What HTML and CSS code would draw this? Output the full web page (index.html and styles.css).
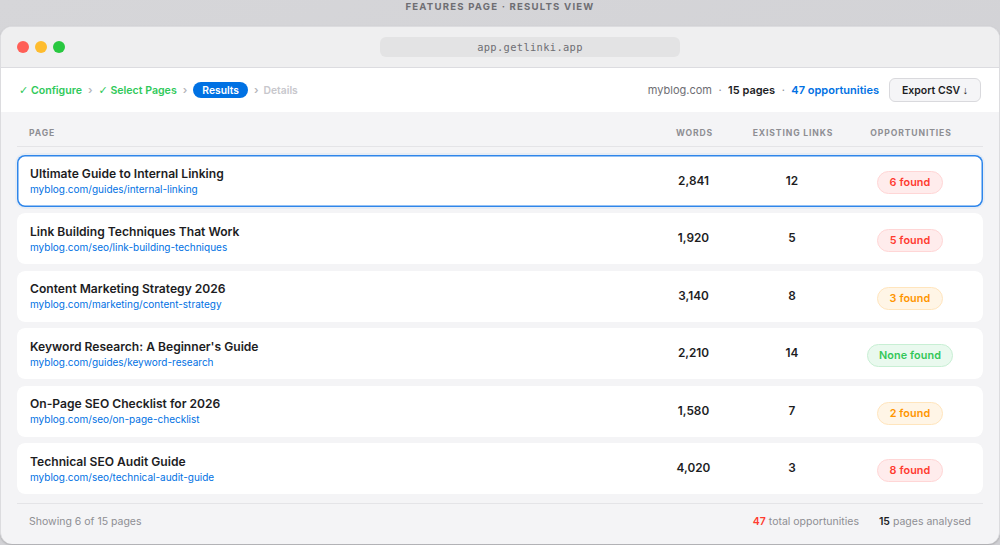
FILE: index.html
```html
<!DOCTYPE html>
<html lang="en">
<head>
<meta charset="utf-8">
<title>Results view</title>
<link rel="stylesheet" href="styles.css">
</head>
<body>
<div class="caption">FEATURES PAGE · RESULTS VIEW</div>
<main class="window">
  <header class="titlebar">
    <div class="lights"><i class="light l-red"></i><i class="light l-yellow"></i><i class="light l-green"></i></div>
    <div class="address">app.getlinki.app</div>
  </header>
  <nav class="toolbar">
    <div class="steps">
      <span class="step done"><span class="tick">✓</span> Configure</span><span class="sep">›</span>
      <span class="step done"><span class="tick">✓</span> Select Pages</span><span class="sep">›</span>
      <span class="step current">Results</span><span class="sep">›</span>
      <span class="step todo">Details</span>
    </div>
    <div class="summary">
      <span class="domain">myblog.com</span><span class="dot">·</span>
      <strong class="count">15 pages</strong><span class="dot">·</span>
      <strong class="opps">47 opportunities</strong>
      <button class="export">Export CSV <span class="arrow">↓</span></button>
    </div>
  </nav>
  <section class="content">
    <div class="grid head">
      <span>PAGE</span><span class="center">WORDS</span><span class="center">EXISTING LINKS</span><span class="center">OPPORTUNITIES</span>
    </div>
    <div class="rows">
      <article class="grid row selected">
        <div><h2>Ultimate Guide to Internal Linking</h2><a>myblog.com/guides/internal-linking</a></div>
        <b class="center">2,841</b><b class="center">12</b>
        <div class="center"><span class="pill bad">6 found</span></div>
      </article>
      <article class="grid row">
        <div><h2>Link Building Techniques That Work</h2><a>myblog.com/seo/link-building-techniques</a></div>
        <b class="center">1,920</b><b class="center">5</b>
        <div class="center"><span class="pill bad">5 found</span></div>
      </article>
      <article class="grid row">
        <div><h2>Content Marketing Strategy 2026</h2><a>myblog.com/marketing/content-strategy</a></div>
        <b class="center">3,140</b><b class="center">8</b>
        <div class="center"><span class="pill warn">3 found</span></div>
      </article>
      <article class="grid row">
        <div><h2>Keyword Research: A Beginner's Guide</h2><a>myblog.com/guides/keyword-research</a></div>
        <b class="center">2,210</b><b class="center">14</b>
        <div class="center"><span class="pill good">None found</span></div>
      </article>
      <article class="grid row">
        <div><h2>On-Page SEO Checklist for 2026</h2><a>myblog.com/seo/on-page-checklist</a></div>
        <b class="center">1,580</b><b class="center">7</b>
        <div class="center"><span class="pill warn">2 found</span></div>
      </article>
      <article class="grid row">
        <div><h2>Technical SEO Audit Guide</h2><a>myblog.com/seo/technical-audit-guide</a></div>
        <b class="center">4,020</b><b class="center">3</b>
        <div class="center"><span class="pill bad">8 found</span></div>
      </article>
    </div>
    <footer class="foot">
      <span>Showing 6 of 15 pages</span>
      <div class="totals">
        <span><b class="total-red">47</b> total opportunities</span>
        <span><b class="total-ink">15</b> pages analysed</span>
      </div>
    </footer>
  </section>
</main>
</body>
</html>
```

FILE: styles.css
```css
* { box-sizing: border-box; }
html, body { margin: 0; height: 545px; overflow: hidden; }
body {
  background: linear-gradient(160deg, #d6d6d9, #cfcfd3);
  font-family: Inter, "Liberation Sans", sans-serif;
  color: #1d1d1f;
}
.caption {
  height: 26px;
  text-align: center;
  font-size: 9.6px;
  line-height: 13px;
  font-weight: 700;
  letter-spacing: 1.2px;
  color: #6e6e73;
}
.window {
  height: 518px;
  background: #f4f4f6;
  border-radius: 12px;
  overflow: hidden;
  border: 1px solid #dcdcdf;
  border-width: 1px 1px 0 1px;
  box-shadow: 0 1px 2px rgba(0,0,0,.2);
  display: flex;
  flex-direction: column;
}
.titlebar {
  height: 41px;
  flex: none;
  background: #efeff0;
  border-bottom: 1px solid #dcdce0;
  display: flex;
  align-items: center;
  justify-content: center;
  position: relative;
}
.lights { position: absolute; left: 16px; top: 14px; display: flex; gap: 6px; }
.light { width: 12px; height: 12px; border-radius: 50%; display: block; }
.l-red { background: #ff5f57; }
.l-yellow { background: #febc2e; }
.l-green { background: #28c840; }
.address {
  width: 300px;
  height: 20px;
  margin-left: 60px;
  border-radius: 6px;
  background: #e3e3e4;
  color: #6e6e73;
  font: 10.4px/20px "DejaVu Sans Mono", monospace;
  letter-spacing: .35px;
  text-align: center;
}
.toolbar {
  height: 44px;
  flex: none;
  background: #fff;
  display: flex;
  align-items: center;
  justify-content: space-between;
  padding: 0 18px;
}
.steps { display: flex; align-items: center; gap: 5px; font-size: 10.6px; font-weight: 600; }
.done { color: #30c95a; }
.tick { font-family: "DejaVu Sans", sans-serif; font-size: 11px; font-weight: 700; }
.sep { color: #b5b5ba; font-size: 11px; line-height: 12px; margin: 0 1px; }
.current { background: #0071e3; color: #fff; border-radius: 9px; padding: 0 9px; line-height: 16px; height: 16px; font-size: 10.3px; }
.todo { color: #c7c7cc; font-size: 10.3px; margin-left: -1px; }
.summary { display: flex; align-items: center; font-size: 11px; }
.domain { color: #6e6e73; }
.dot { color: #8e8e93; margin: 0 6.5px; }
.count { font-weight: 600; font-size: 11px; color: #1d1d1f; }
.opps { font-weight: 600; font-size: 11px; color: #0071e3; }
.export {
  margin-left: 10px;
  width: 92px;
  height: 24px;
  border: 1px solid #d9d9dd;
  border-radius: 6px;
  background: #f5f5f7;
  font: 600 10.5px Inter, sans-serif;
  color: #1d1d1f;
  padding: 0;
}
.arrow { font-family: "Liberation Sans", sans-serif; font-weight: 400; }
.content { flex: 1; padding: 0 16px; display: flex; flex-direction: column; }
.grid {
  display: grid;
  grid-template-columns: 1fr 81px 116px 120px;
  align-items: center;
}
.center { text-align: center; }
.head {
  height: 35px;
  flex: none;
  padding: 7px 12px 0;
  border-bottom: 1px solid #e4e4e7;
  font-size: 8.6px;
  font-weight: 700;
  letter-spacing: .87px;
  color: #8e8e93;
}
.rows { display: flex; flex-direction: column; gap: 6.7px; padding-top: 7.6px; }
.row {
  height: 50.8px;
  padding: 0 13px 1px;
  background: #fff;
  border-radius: 8px;
  box-shadow: 0 0 1px rgba(0,0,0,.03);
}
.selected { height: 52px; padding-bottom: 0; box-shadow: inset 0 0 0 1.5px #2f86ea, 0 0 0 2px rgba(0,113,227,.05); }
h2 { margin: 0 0 1px; font-size: 12.1px; line-height: 16px; font-weight: 600; color: #1d1d1f; }
a { display: block; font-size: 10px; line-height: 12px; color: #0071e3; }
.row > b { font-size: 11.8px; font-weight: 600; }
.pill {
  display: inline-block;
  height: 23px;
  line-height: 21px;
  padding: 0 11.5px;
  border-radius: 12px;
  border: 1px solid;
  font-size: 10.8px;
  letter-spacing: .1px;
  font-weight: 600;
  position: relative;
  top: 2px;
}
.selected .pill { top: 1.5px; }
.bad { background: #ffecec; border-color: #ffd6d6; color: #ff3b30; }
.warn { background: #fff5e6; border-color: #ffe5bd; color: #ff9500; }
.good { background: #e9f9ee; border-color: #c8efd4; color: #34c759; }
.foot {
  margin-top: 9px;
  border-top: 1px solid #e4e4e7;
  padding: 10.5px 12px 0;
  display: flex;
  justify-content: space-between;
  font-size: 10.5px;
  line-height: 14px;
  color: #8e8e93;
}
.totals { display: flex; gap: 20px; }
.total-red { color: #ff3b30; font-weight: 600; }
.total-ink { color: #1d1d1f; font-weight: 600; }
```
